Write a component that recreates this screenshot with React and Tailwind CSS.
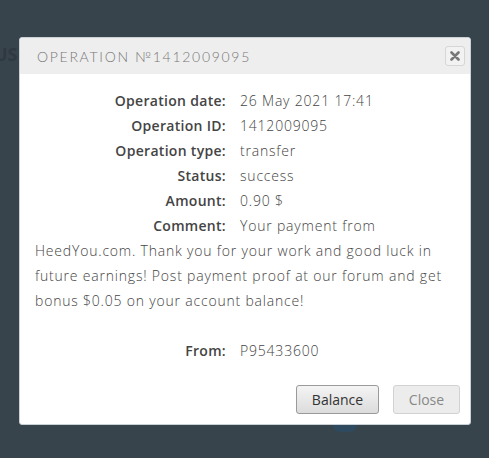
export default function App() {
  const rows = [
    ["Operation date:", "26 May 2021 17:41"],
    ["Operation ID:", "1412009095"],
    ["Operation type:", "transfer"],
    ["Status:", "success"],
    ["Amount:", "0.90 $"],
  ];

  return (
    <div className="relative w-[489px] h-[458px] bg-[#37444c] overflow-hidden font-['Open_Sans',sans-serif] pt-[37px] pl-[19px]">
      {/* background bits under the overlay */}
      <div className="absolute left-[-6px] top-[40px] text-[#2e3940] text-lg font-bold">US</div>
      <div className="absolute left-[333px] top-[418px] w-[24px] h-[14px] rounded-full bg-[#2f4a5e]" />

      <div className="relative w-[452px] h-[388px] bg-white border border-[#c9d0d6] rounded-[3px] flex flex-col">
        <div className="h-[36px] bg-[#eeeeee] flex items-center justify-between pl-[17px] pr-[5px] rounded-t-[3px]">
          <span className="text-[#777] text-[14px] tracking-[1.7px] font-['Lato',sans-serif] font-light">
            OPERATION №1412009095
          </span>
          <button className="w-[20px] h-[20px] border border-[#d6d6d6] rounded-[3px] bg-[#f2f2f2] flex items-center justify-center">
            <svg width="10" height="10" viewBox="0 0 10 10">
              <path d="M1.5 1.5L8.5 8.5M8.5 1.5L1.5 8.5" stroke="#777" strokeWidth="2.6" strokeLinecap="round" />
            </svg>
          </button>
        </div>

        <div className="px-[15px] pt-[14px] text-[14px] leading-[25px] text-[#444] font-light tracking-[0.8px]">
          {rows.map(([k, v]) => (
            <div key={k}>
              <span className="inline-block w-[191px] text-right font-semibold text-[#444] tracking-[0.3px] mr-[14px]">{k}</span>
              <span>{v}</span>
            </div>
          ))}
          <div>
            <span className="inline-block w-[191px] text-right font-semibold text-[#444] tracking-[0.3px] mr-[14px]">Comment:</span>
            Your payment from HeedYou.com. Thank you for your work and good luck in future earnings! Post payment proof at our forum and get bonus $0.05 on your account balance!
          </div>
          <div className="mt-[25px]">
            <span className="inline-block w-[191px] text-right font-semibold text-[#444] tracking-[0.3px] mr-[14px]">From:</span>
            <span>P95433600</span>
          </div>
        </div>

        <div className="mt-auto flex justify-end gap-[14px] pr-[10px] pb-[10px]">
          <button className="w-[83px] h-[29px] rounded-[3px] border border-[#9a9a9a] bg-gradient-to-b from-[#f4f4f4] to-[#dcdcdc] text-[14px] text-[#333]">
            Balance
          </button>
          <button className="w-[67px] h-[29px] rounded-[3px] border border-[#d2d2d2] bg-[#ececec] text-[14px] text-[#888]">
            Close
          </button>
        </div>
      </div>
    </div>
  );
}
